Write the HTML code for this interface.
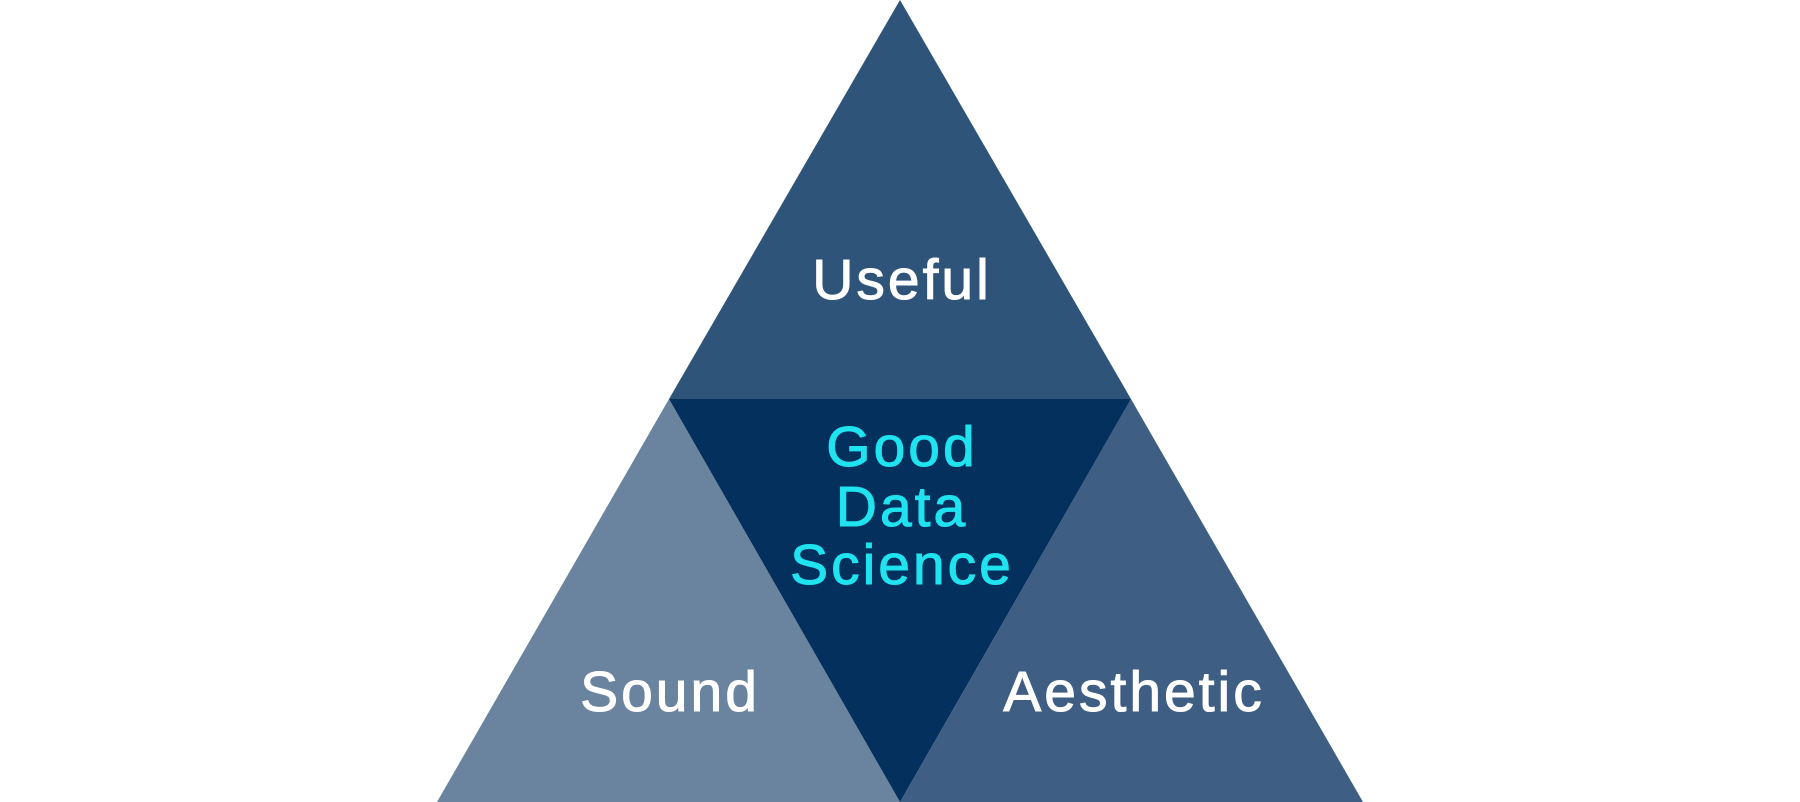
<!DOCTYPE html>
<html><head><style>html,body{margin:0;padding:0;background:#fff;width:1800px;height:802px;overflow:hidden}</style></head>
<body>
<svg width="1800" height="802" viewBox="0 0 1800 802" xmlns="http://www.w3.org/2000/svg">
<polygon points="900,0 1131,399 669,399" fill="#2e5479"/>
<polygon points="669,399 900,802 437,802" fill="#6a84a0"/>
<polygon points="1131,399 1363,802 900,802" fill="#3e5e84"/>
<polygon points="669,399 1131,399 900,802" fill="#04305e"/>
<g font-family="Liberation Sans, sans-serif" font-size="57" letter-spacing="3" text-anchor="middle" fill="#fff" stroke="#fff" stroke-width="1">
<text x="902" y="299">Useful</text>
<text x="670" y="711">Sound</text>
<text x="1134" y="711">Aesthetic</text>
</g>
<g font-family="Liberation Sans, sans-serif" font-size="57" letter-spacing="3" text-anchor="middle" fill="#1fe3ef" stroke="#1fe3ef" stroke-width="1">
<text x="902" y="466">Good</text>
<text x="902" y="526">Data</text>
<text x="902" y="584">Science</text>
</g>
</svg>
</body></html>
